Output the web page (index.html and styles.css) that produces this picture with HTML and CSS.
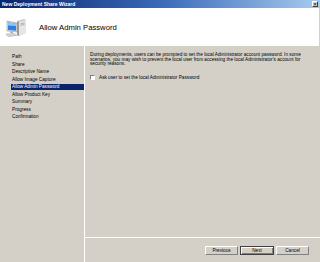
FILE: index.html
```html
<!DOCTYPE html>
<html>
<head>
    <title>New Deployment Share Wizard</title>
    <link rel="stylesheet" href="styles.css">
</head>
<body>
    <div class="window">
        <div class="titlebar">
            <span class="title-text">New Deployment Share Wizard</span>
            <span class="close-btn">&#215;</span>
        </div>

        <div class="header">
            <svg class="header-icon" width="22" height="20" viewBox="0 0 22 20">
                <!-- tower -->
                <path d="M12 3 L19 1 L21 2 L21 15 L14 18 L12 17 Z" fill="#c9c9c9"/>
                <path d="M14 4 L21 2 L21 15 L14 18 Z" fill="#e6e6e6"/>
                <path d="M12 3 L14 4 L14 18 L12 17 Z" fill="#9a9a9a"/>
                <path d="M15.5 6 L19.5 4.8 M15.5 7.5 L19.5 6.3" stroke="#8a8a8a" stroke-width="0.6"/>
                <!-- monitor -->
                <path d="M2 3 L12 5 L12 14 L2 13 Z" fill="#dcdcdc" stroke="#8a8a8a" stroke-width="0.5"/>
                <path d="M3 4.2 L11 5.8 L11 12.8 L3 12 Z" fill="#2f7fe0"/>
                <path d="M3 4.2 L11 5.8 L11 8 L3 7.5 Z" fill="#8ec3ff"/>
                <path d="M6 13.3 L8 13.5 L8 15 L5 15 Z" fill="#b0b0b0"/>
                <!-- keyboard -->
                <path d="M1 16 L9 15.5 L12 17.5 L3 18.5 Z" fill="#d8d8d8" stroke="#8a8a8a" stroke-width="0.4"/>
            </svg>
            <span class="header-title">Allow Admin Password</span>
        </div>

        <div class="main">
            <ul class="steps">
                <li>Path</li>
                <li>Share</li>
                <li>Descriptive Name</li>
                <li>Allow Image Capture</li>
                <li class="active">Allow Admin Password</li>
                <li>Allow Product Key</li>
                <li>Summary</li>
                <li>Progress</li>
                <li>Confirmation</li>
            </ul>

            <div class="right-pane">
                <div class="content">
                    <p class="description">
                        During deployments, users can be prompted to set the local Administrator account password. In some<br>
                        scenarios, you may wish to prevent the local user from accessing the local Administrator's account for<br>
                        security reasons.
                    </p>
                    <label class="check-row">
                        <span class="checkbox"></span>
                        Ask user to set the local Administrator Password
                    </label>
                </div>
                <div class="buttons">
                    <button>Previous</button>
                    <button class="default">Next</button>
                    <button>Cancel</button>
                </div>
            </div>
        </div>
    </div>
</body>
</html>
```

FILE: styles.css
```css
body {
    margin: 0;
    font-family: "Liberation Sans", Arial, sans-serif;
    background-color: #d4d0c8;
}
.window {
    width: 320px;
    height: 262px;
    display: flex;
    flex-direction: column;
    overflow: hidden;
}
.titlebar {
    height: 8px;
    display: flex;
    align-items: center;
    justify-content: space-between;
    padding: 0 2px 0 2px;
    background: linear-gradient(to right, #0a246a, #3a6ab8 50%, #a6caf0);
}
.title-text {
    color: white;
    font-weight: bold;
    font-size: 5px;
}
.close-btn {
    width: 6px;
    height: 6px;
    background-color: #d4d0c8;
    border: 1px solid;
    border-color: #fff #404040 #404040 #fff;
    box-sizing: border-box;
    font-size: 6px;
    line-height: 4px;
    text-align: center;
    color: #000;
}
.header {
    height: 38px;
    background-color: white;
    display: flex;
    align-items: center;
    padding-left: 5px;
    margin-right: 1px;
}
.header-icon {
    margin-top: 1px;
}
.header-title {
    margin-left: 12px;
    font-size: 7.7px;
    color: #000;
}
.main {
    flex: 1;
    display: flex;
}
.steps {
    list-style: none;
    margin: 0;
    padding: 8px 0 0 11px;
    width: 84px;
    box-sizing: border-box;
    font-size: 4.7px;
    color: #000;
}
.steps li {
    height: 6px;
    line-height: 6px;
    margin-bottom: 1.5px;
    padding-left: 1px;
    white-space: nowrap;
}
.steps li.active {
    background-color: #0a246a;
    color: white;
}
.right-pane {
    flex: 1;
    display: flex;
    flex-direction: column;
    border-left: 1px solid white;
}
.content {
    flex: 1;
    padding: 7px 6px 0 5px;
    border-bottom: 1px solid white;
    font-size: 4.7px;
}
.description {
    margin: 0;
    line-height: 4.7px;
    white-space: nowrap;
}
.check-row {
    display: flex;
    align-items: center;
    margin-top: 8px;
}
.checkbox {
    width: 5px;
    height: 5px;
    box-sizing: border-box;
    background-color: white;
    border: 1px solid;
    border-color: #808080 #fff #fff #808080;
    margin-right: 4px;
}
.buttons {
    height: 24px;
    display: flex;
    justify-content: flex-end;
    padding: 8px 11px 0 0;
    box-sizing: border-box;
    gap: 2px;
}
button {
    width: 33px;
    height: 9px;
    padding: 0;
    font-family: "Liberation Sans", Arial, sans-serif;
    font-size: 4.7px;
    color: #000;
    background-color: #d4d0c8;
    border: 1px solid;
    border-color: #fff #808080 #808080 #fff;
}
button.default {
    width: 34px;
    outline: 1px solid #404040;
    outline-offset: -1px;
    border-color: #404040;
    box-shadow: inset 1px 1px 0 #fff, inset -1px -1px 0 #808080;
}
```
